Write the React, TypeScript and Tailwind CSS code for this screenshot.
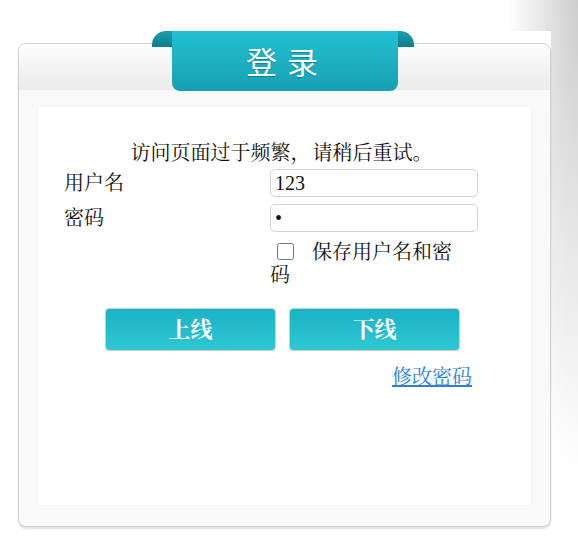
import { useState } from 'react'

const serif = { fontFamily: '"Liberation Serif", "Noto Serif CJK SC", "Noto Sans CJK SC", serif' }

export default function App() {
  const [user, setUser] = useState('123')
  const [pwd, setPwd] = useState('1')
  const [save, setSave] = useState(false)

  return (
    <div
      className="w-[578px] h-[548px] overflow-hidden bg-[radial-gradient(ellipse_70px_480px_at_100%_0%,#cdcdcd_0%,#ffffff_100%)]"
      style={serif}
    >
      <div className="mt-[31px] w-[551px] h-[517px] bg-white pl-[18px] pt-[12px]">
        <div className="relative w-[533px] h-[484px] rounded-[8px] border border-[#d2d2d2] bg-[#f9f9f9] shadow-[0_2px_2px_rgba(0,0,0,0.12)] flex flex-col">
          {/* header band */}
          <div className="h-[46px] rounded-t-[8px] bg-gradient-to-b from-[#fefefe] to-[#ebebeb]" />

          {/* ribbon */}
          <div className="absolute left-[133px] -top-[13px] w-[262px] h-[60px]">
            <div className="absolute left-0 top-0 w-[26px] h-[16px] rounded-tl-[14px] rounded-tr-[4px] bg-gradient-to-b from-[#1c9fae] to-[#0d7d8a]" />
            <div className="absolute right-0 top-0 w-[24px] h-[16px] rounded-tr-[14px] rounded-tl-[4px] bg-gradient-to-b from-[#1c9fae] to-[#0d7d8a]" />
            <div className="absolute left-[20px] right-[16px] top-0 h-[60px] rounded-b-[8px] bg-gradient-to-b from-[#22c1d3] to-[#17a0b1] flex items-center justify-center">
              <span
                className="text-white text-[31px] tracking-[10px] pl-[4px] [text-shadow:0_1px_1px_rgba(0,0,0,0.25)]"
                style={{ fontFamily: '"Noto Sans CJK SC", sans-serif' }}
              >
                登录
              </span>
            </div>
          </div>

          {/* inner panel */}
          <div className="mx-[19px] mt-[17px] h-[398px] bg-white shadow-[0_0_3px_rgba(0,0,0,0.04)] text-[20px] text-[#111] flex flex-col">
            <div
              className="text-center pt-[33px] pr-[6px] leading-[24px]"
              style={{ fontFamily: '"Noto Serif CJK SC", serif' }}
            >
              访问页面过于频繁<span className="inline-block w-[22px] text-left">，</span>请稍后重试。
            </div>
            <div className="pl-[26px] mt-[5px] grid grid-cols-[206px_208px] gap-y-[7px] leading-[23px]">
              <div className="flex items-center h-[28px]">用户名</div>
              <input
                value={user}
                onChange={e => setUser(e.target.value)}
                className="h-[28px] w-[208px] rounded-[5px] border border-[#d4d4d4] px-[4px] text-[20px] outline-none"
              />
              <div className="flex items-center h-[28px]">密码</div>
              <input
                type="password"
                value={pwd}
                onChange={e => setPwd(e.target.value)}
                className="h-[28px] w-[208px] rounded-[5px] border border-[#d4d4d4] px-[4px] text-[20px] outline-none"
              />
              <div />
              <label className="leading-[23px] w-[190px] mt-[2px]">
                <input
                  type="checkbox"
                  checked={save}
                  onChange={e => setSave(e.target.checked)}
                  className="w-[17px] h-[17px] ml-[7px] mr-[18px] align-[-1px]"
                />
                保存用户名和密码
              </label>
            </div>

            <div className="flex justify-center gap-[13px] mt-[21px] pr-[4px]">
              <button className="w-[171px] h-[43px] rounded-[4px] border border-[#cfcfcf] bg-gradient-to-b from-[#1bb3c6] to-[#2ec7d4] text-white text-[22px] font-bold">
                上线
              </button>
              <button className="w-[171px] h-[43px] rounded-[4px] border border-[#cfcfcf] bg-gradient-to-b from-[#1bb3c6] to-[#2ec7d4] text-white text-[22px] font-bold">
                下线
              </button>
            </div>

            <div className="flex justify-end pr-[59px] mt-[14px]">
              <a href="#" className="text-[#2d7fd5] underline leading-[24px]">修改密码</a>
            </div>
          </div>
        </div>
      </div>
    </div>
  )
}
